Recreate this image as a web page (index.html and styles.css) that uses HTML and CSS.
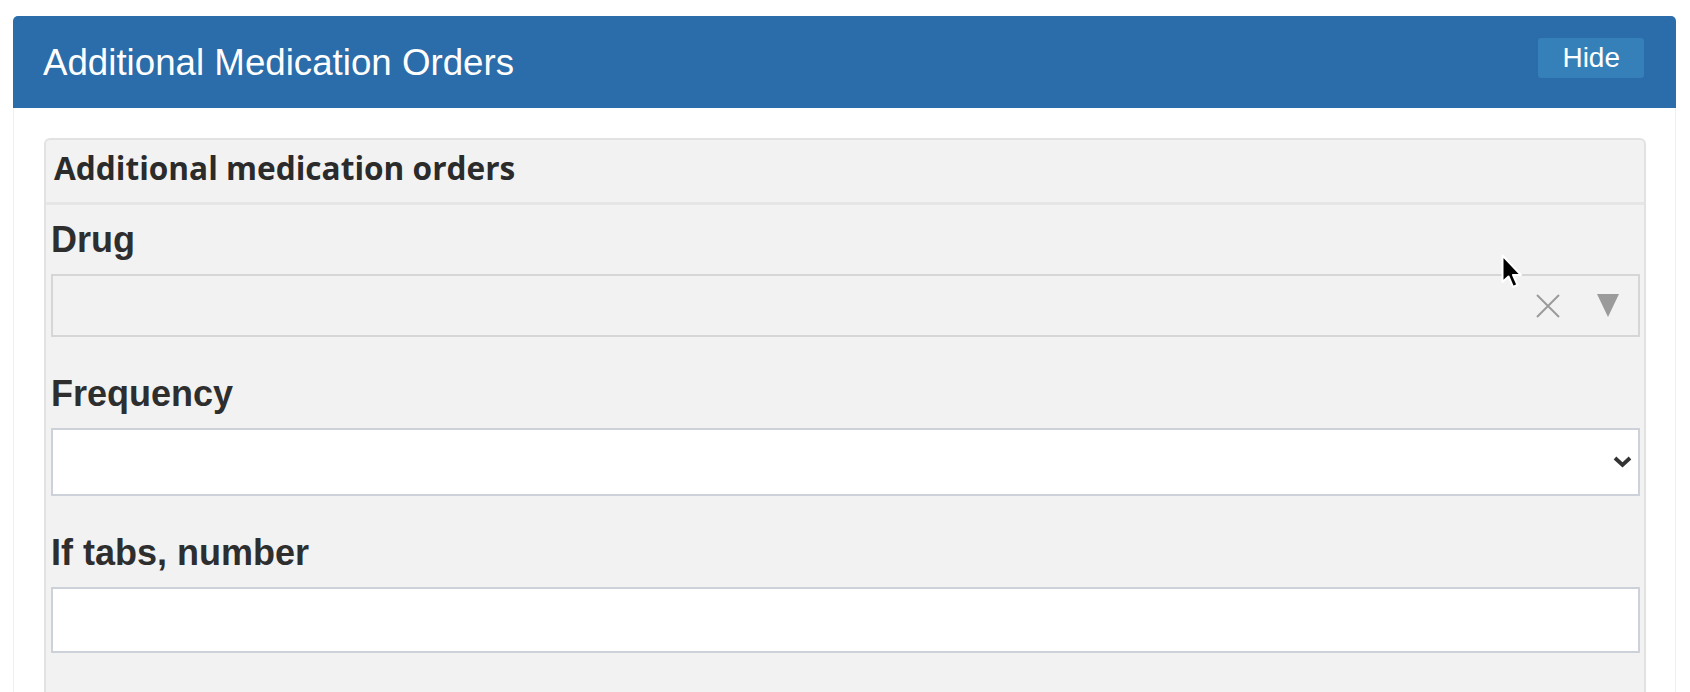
FILE: index.html
```html
<!DOCTYPE html>
<html lang="en">
<head>
<meta charset="utf-8">
<title>Additional Medication Orders</title>
<link rel="stylesheet" href="styles.css">
</head>
<body>
<div class="panel">
  <div class="panel-heading">
    <h2 class="panel-title">Additional Medication Orders</h2>
    <button class="btn-hide" type="button">Hide</button>
  </div>
  <div class="panel-body">
    <div class="card">
      <div class="card-header">Additional medication orders</div>
      <div class="card-body">
        <div class="field">
          <label class="field-label">Drug</label>
          <div class="combo">
            <svg class="icon-clear" width="24" height="24" viewBox="0 0 24 24"><path d="M1 1 L23 23 M23 1 L1 23" stroke="#9b9b9b" stroke-width="2" fill="none"/></svg>
            <svg class="icon-caret" width="22" height="23" viewBox="0 0 22 23"><polygon points="0,0 22,0 11,23" fill="#9b9b9b"/></svg>
          </div>
        </div>
        <div class="field">
          <label class="field-label">Frequency</label>
          <div class="select">
            <svg class="icon-chevron" width="19" height="12" viewBox="0 0 19 12"><path d="M2 2 L9.5 9 L17 2" stroke="#333" stroke-width="3.8" fill="none"/></svg>
          </div>
        </div>
        <div class="field">
          <label class="field-label">If tabs, number</label>
          <div class="text-input"></div>
        </div>
      </div>
    </div>
  </div>
</div>
<svg class="cursor" width="22" height="36" viewBox="0 0 22 36"><path d="M1.5 1.5 L1.5 28 L7.5 22.5 L12 33 L16.5 31 L12 21 L20 21 Z" fill="#000" stroke="#fff" stroke-width="2" stroke-linejoin="round"/></svg>
</body>
</html>
```

FILE: styles.css
```css
html, body {
  margin: 0;
  padding: 0;
  background: #ffffff;
  height: 692px;
  overflow: hidden;
}

body {
  position: relative;
  font-family: "Liberation Sans", Arial, sans-serif;
  color: #333333;
}

.panel {
  margin: 16px 14px 0 13px;
}

.panel-heading {
  box-sizing: border-box;
  height: 92px;
  background: #2b6caa;
  border-radius: 5px 5px 0 0;
  padding: 22px 32px 0 30px;
  display: flex;
  justify-content: space-between;
  align-items: flex-start;
}

.panel-title {
  margin: 2px 0 0 0;
  font-family: "Liberation Sans", Arial, sans-serif;
  font-weight: normal;
  font-size: 36.7px;
  line-height: 46px;
  color: #ffffff;
}

.btn-hide {
  height: 40px;
  padding: 0 24px;
  border: none;
  border-radius: 3px;
  background: #3580b8;
  color: #ffffff;
  font-family: "Liberation Sans", Arial, sans-serif;
  font-size: 28px;
  line-height: 40px;
}

.panel-body {
  border-left: 1px solid #f0f0f0;
  border-right: 1px solid #f0f0f0;
  padding: 30px 29px 80px 30px;
  background: #ffffff;
}

.card {
  background: #f2f2f2;
  border: 2px solid #e2e2e2;
  border-radius: 6px;
  padding-bottom: 80px;
}

.card-header {
  font-family: "Open Sans", "Noto Sans", sans-serif;
  font-weight: 700;
  font-size: 31.6px;
  line-height: 44px;
  color: #2b2b2b;
  padding: 6px 9px 12px 8px;
  border-bottom: 3px solid #e6e6e6;
}

.card-body {
  padding: 15px 4px 0 5px;
  display: flex;
  flex-direction: column;
  gap: 37px;
}

.field {
  display: flex;
  flex-direction: column;
}

.field-label {
  display: block;
  font-family: "Liberation Sans", Arial, sans-serif;
  font-weight: 700;
  font-size: 36px;
  line-height: 40px;
  color: #2e2e2e;
  margin-bottom: 14px;
}

.combo {
  box-sizing: border-box;
  height: 63px;
  border: 2px solid #d6d6d6;
  background: #f2f2f2;
  display: flex;
  align-items: center;
  justify-content: flex-end;
  padding-right: 19px;
}

.icon-clear {
  margin-right: 37px;
}

.select {
  box-sizing: border-box;
  height: 68px;
  border: 2px solid #cdd1da;
  background: #ffffff;
  display: flex;
  align-items: center;
  justify-content: flex-end;
  padding-right: 6px;
}

.text-input {
  box-sizing: border-box;
  height: 66px;
  border: 2px solid #cdd1da;
  background: #ffffff;
}

.cursor {
  position: absolute;
  left: 1501px;
  top: 254px;
}
```
